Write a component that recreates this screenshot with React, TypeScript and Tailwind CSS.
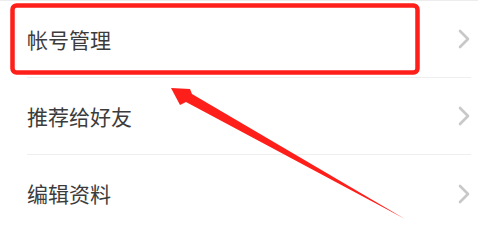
import React from "react";

const items = ["帐号管理", "推荐给好友", "编辑资料"];

function Chevron() {
  return (
    <svg width="14" height="20" viewBox="0 0 14 20" className="shrink-0">
      <path d="M3 2 L11 10 L3 18" fill="none" stroke="#c8c8c8" strokeWidth="2.6" strokeLinecap="round" strokeLinejoin="round" />
    </svg>
  );
}

export default function App() {
  return (
    <div className="relative w-[478px] h-[230px] overflow-hidden bg-white" style={{ fontFamily: '"Noto Sans CJK SC", "Noto Sans", sans-serif' }}>
      <div className="border-t border-[#ececec]">
        {items.map((t, i) => (
          <div key={t} className="flex items-center h-[77px] pl-[27px] pr-[7px]">
            <div className={`flex flex-1 items-center h-full ${i < 2 ? "border-b border-[#eeeeee]" : ""}`}>
              <span className="flex-1 text-[21px] leading-none text-[#3c3c3c]">{t}</span>
              <Chevron />
            </div>
          </div>
        ))}
      </div>
      <svg className="absolute left-0 top-0 pointer-events-none" width="478" height="230" viewBox="0 0 478 230">
        <rect x="12.5" y="5.5" width="405" height="67" rx="4" fill="none" stroke="#ff1f1a" strokeWidth="4.5" />
        <polygon points="171,88 190,89 192,94 405,219 186,102 180,105" fill="#ff1f1a" />
      </svg>
    </div>
  );
}
